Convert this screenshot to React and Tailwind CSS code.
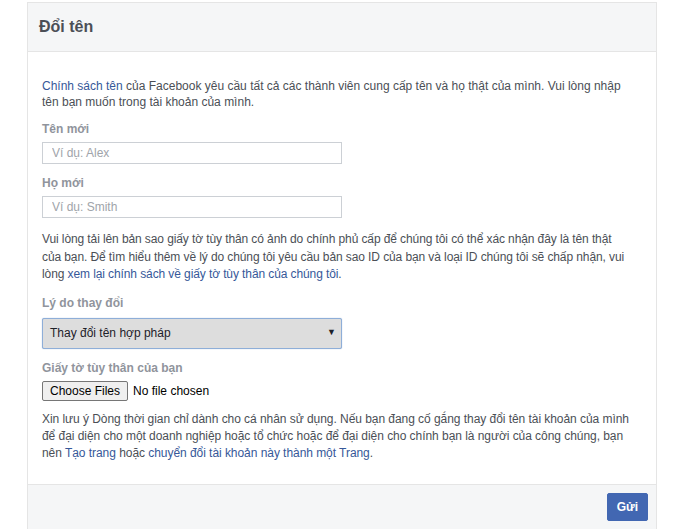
import React from 'react'

const font = { fontFamily: '"Liberation Sans", Arial, Helvetica, sans-serif' }

function Label({ children, gap = 'mb-[5px]' }) {
  return <div className={`text-[12px] font-bold text-[#90949c] leading-[16px] ${gap}`}>{children}</div>
}

export default function App() {
  return (
    <div className="w-[700px] h-[529px] bg-white overflow-hidden pt-[2px]" style={font}>
      <div className="ml-[27px] w-[630px] border border-[#e5e5e5] border-b-0 bg-white">
        <div className="h-[49px] bg-[#f5f6f7] border-b border-[#e5e5e5] flex items-center px-[11px]">
          <h1 className="text-[16px] font-bold text-[#4b4f56]">Đổi tên</h1>
        </div>

        <div className="px-[14px] pt-[26px] pb-[22px] text-[12px] text-[#4b4f56]">
          <p className="leading-[16px] pr-[20px]">
            <a className="text-[#365899]">Chính sách tên</a> của Facebook yêu cầu tất cả các thành viên cung cấp tên và họ thật của mình. Vui lòng nhập tên bạn muốn trong tài khoản của mình.
          </p>

          <div className="mt-[11px]">
            <Label>Tên mới</Label>
            <input
              placeholder="Ví dụ: Alex"
              className="w-[300px] h-[22px] border border-[#ccd0d5] px-[9px] text-[12px] placeholder:text-[#a0a4aa] outline-none"
              style={font}
            />
          </div>

          <div className="mt-[11px]">
            <Label>Họ mới</Label>
            <input
              placeholder="Ví dụ: Smith"
              className="w-[300px] h-[22px] border border-[#ccd0d5] px-[9px] text-[12px] placeholder:text-[#a0a4aa] outline-none"
              style={font}
            />
          </div>

          <p className="leading-[17.5px] mt-[13px] pr-[10px] tracking-[-0.1px]">
            Vui lòng tải lên bản sao giấy tờ tùy thân có ảnh do chính phủ cấp để chúng tôi có thể xác nhận đây là tên thật của bạn. Để tìm hiểu thêm về lý do chúng tôi yêu cầu bản sao ID của bạn và loại ID chúng tôi sẽ chấp nhận, vui lòng <a className="text-[#365899]">xem lại chính sách về giấy tờ tùy thân của chúng tôi</a>.
          </p>

          <div className="mt-[11px]">
            <Label gap="mb-[7px]">Lý do thay đổi</Label>
            <div className="w-[300px] h-[31px] bg-[#dddddd] border border-[#8eaed8] rounded-[2px] shadow-[0_0_1px_#8eaed8] flex items-center justify-between px-[7px]">
              <span className="text-[12px] text-[#1d2129]">Thay đổi tên hợp pháp</span>
              <span className="text-[9px] text-[#1d2129] mr-[-2px]">▼</span>
            </div>
          </div>

          <div className="mt-[11px]">
            <Label>Giấy tờ tùy thân của bạn</Label>
            <div className="flex items-center gap-[5px]">
              <button className="h-[20px] px-[7px] bg-[#efefef] border border-[#767676] rounded-[2px] text-[12px] text-black leading-none" style={font}>Choose Files</button>
              <span className="text-[12px] text-black">No file chosen</span>
            </div>
          </div>

          <p className="leading-[17px] mt-[10px] pr-[8px] tracking-[-0.05px]">
            Xin lưu ý Dòng thời gian chỉ dành cho cá nhân sử dụng. Nếu bạn đang cố gắng thay đổi tên tài khoản của mình để đại diện cho một doanh nghiệp hoặc tổ chức hoặc để đại diện cho chính bạn là người của công chúng, bạn nên <a className="text-[#365899]">Tạo trang</a> hoặc <a className="text-[#365899]">chuyển đổi tài khoản này thành một Trang</a>.
          </p>
        </div>

        <div className="h-[60px] bg-[#f5f6f7] border-t border-[#e5e5e5] flex justify-end items-start pt-[8px] pr-[8px]">
          <button className="h-[28px] px-[9px] bg-[#4267b2] border border-[#4267b2] rounded-[2px] text-white text-[12px] font-bold" style={font}>Gửi</button>
        </div>
      </div>
    </div>
  )
}
